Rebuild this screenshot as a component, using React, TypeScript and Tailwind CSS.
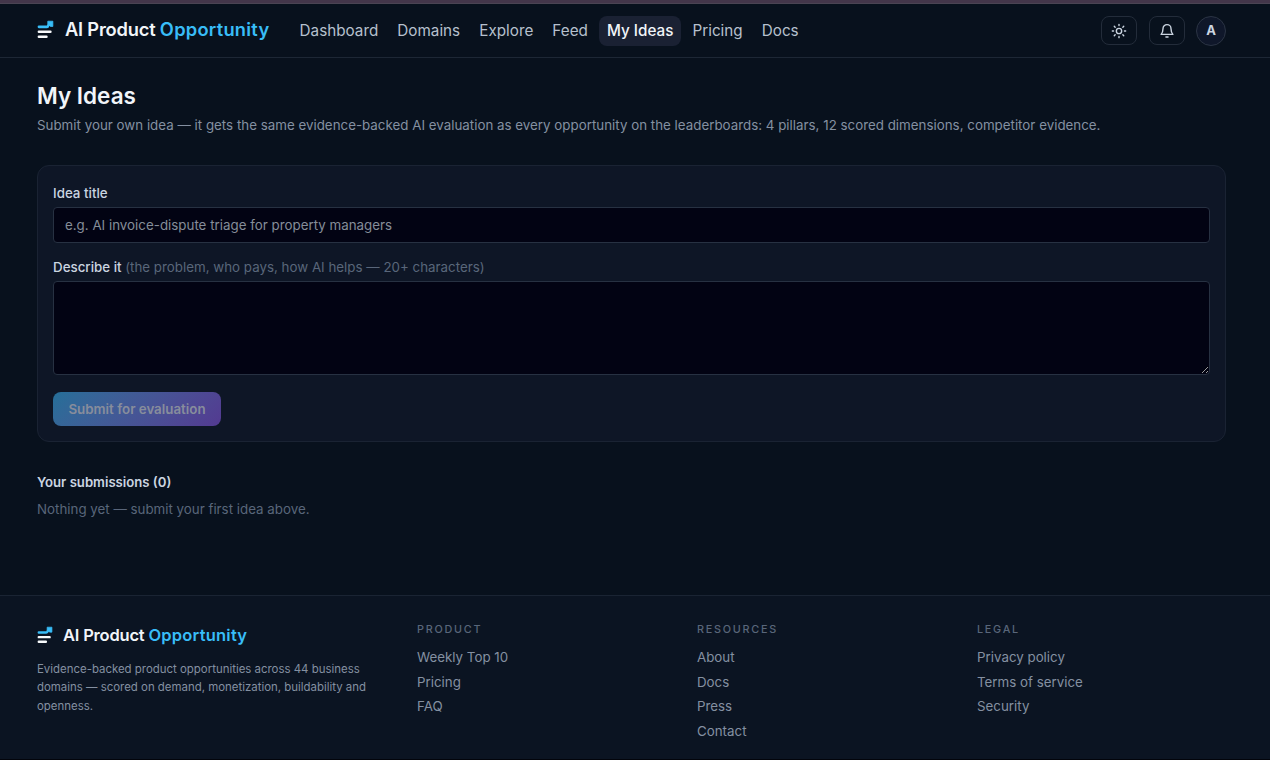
const navItems = [
  { label: "Dashboard" },
  { label: "Domains" },
  { label: "Explore" },
  { label: "Feed" },
  { label: "My Ideas", active: true },
  { label: "Pricing" },
  { label: "Docs" },
];

const footerColumns = [
  { title: "Product", links: ["Weekly Top 10", "Pricing", "FAQ"] },
  { title: "Resources", links: ["About", "Docs", "Press", "Contact"] },
  { title: "Legal", links: ["Privacy policy", "Terms of service", "Security"] },
];

function LogoMark({ className }: { className?: string }) {
  return (
    <svg viewBox="0 0 18 20" fill="none" className={className}>
      <path d="M2 7.2H10.4Q11.8 7.200 12 5.400L14 4" stroke="#38bdf8" strokeWidth="2.7" strokeLinecap="round" strokeLinejoin="round" />
      <path d="M11.400 1.200H16.800V6.800H14.200L11.400 4Z" fill="#38bdf8" stroke="#38bdf8" strokeWidth="0.8" strokeLinejoin="round" />
      <path d="M2 12.400H14.200M2 17.600H10" stroke="#f8fafc" strokeWidth="2.7" strokeLinecap="round" />
    </svg>
  );
}

function SunIcon() {
  return (
    <svg viewBox="0 0 24 24" fill="none" stroke="currentColor" strokeWidth="2.1" strokeLinecap="round" className="h-4 w-4">
      <circle cx="12" cy="12" r="4" />
      <path d="M12 2v1.8M12 20.2V22M2 12h1.8M20.2 12H22M4.9 4.9l1.3 1.3M17.8 17.8l1.3 1.3M4.9 19.1l1.3-1.3M17.8 6.2l1.3-1.3" />
    </svg>
  );
}

function BellIcon() {
  return (
    <svg viewBox="0 0 24 24" fill="none" stroke="currentColor" strokeWidth="2.1" strokeLinecap="round" strokeLinejoin="round" className="h-4 w-4">
      <path d="M6 8.500a6 6 0 0 1 12 0c0 5 1 6.500 2.800 8.600H3.200C5 15 6 13.500 6 8.500Z" />
      <path d="M10.400 21h3.200" />
    </svg>
  );
}

function Header() {
  return (
    <header className="flex h-[54px] shrink-0 items-center border-b border-[#1d2735] pl-[37px] pr-11">
      <a href="#" className="flex items-center pb-[3px]">
        <LogoMark className="h-[19px] w-[17px]" />
        <span className="ml-[11px] w-[205px] whitespace-nowrap text-[18.3px] font-semibold leading-6 tracking-[-0.2px] text-[#f1f5f9]">
          AI Product <span className="tracking-[0.25px] text-[#38bdf8]">Opportunity</span>
        </span>
      </a>
      <nav className="ml-[22px] flex items-center gap-[3.9px]">
        {navItems.map((item) => (
          <a
            key={item.label}
            href="#"
            className={`rounded-lg px-[7.6px] text-[15.25px] leading-[30px] ${
              item.active ? "bg-[#1a2133] font-medium text-[#f1f5f9]" : "text-[#b6c0cd]"
            }`}
          >
            {item.label}
          </a>
        ))}
      </nav>
      <div className="ml-auto flex items-center gap-[11.5px]">
        <button type="button" className="flex h-[29px] w-9 items-center justify-center rounded-lg border border-[#232c3a] text-[#cbd5e1]">
          <SunIcon />
        </button>
        <button type="button" className="flex h-[29px] w-9 items-center justify-center rounded-lg border border-[#232c3a] text-[#cbd5e1]">
          <BellIcon />
        </button>
        <button type="button" className="flex h-[30px] w-[30px] items-center justify-center rounded-full border border-[#2b3444] bg-[#0f172a] text-[13px] font-bold text-[#cbd5e1]">
          A
        </button>
      </div>
    </header>
  );
}

function IdeaForm() {
  return (
    <form className="mt-[30px] flex h-[277px] flex-col items-start rounded-xl border border-[#1a2333] bg-[#0e1626] px-[15px] pt-[17px]">
      <label htmlFor="title" className="text-[13.35px] font-medium leading-5 text-[#cbd5e1]">
        Idea title
      </label>
      <input
        id="title"
        placeholder="e.g. AI invoice-dispute triage for property managers"
        className="mt-1 h-9 w-full shrink-0 rounded-[4px] border border-[#273142] bg-[#020313] px-[11px] text-[13.35px] text-[#cbd5e1] outline-none placeholder:text-[#858d99]"
      />
      <label htmlFor="description" className="mt-[14px] text-[13.35px] font-medium leading-5 text-[#cbd5e1]">
        Describe it{" "}
        <span className="font-normal text-[#59667a]">
          (the problem, who pays, how AI helps — 20+ characters)
        </span>
      </label>
      <textarea
        id="description"
        className="mt-1 h-[94px] w-full shrink-0 resize-y rounded-[4px] border border-[#273142] bg-[#020313] px-[11px] py-2 text-[13.35px] text-[#cbd5e1] outline-none"
      />
      <button
        type="button"
        disabled
        className="mt-[17px] h-[34px] w-[168px] shrink-0 rounded-lg bg-linear-135 from-[#246f99] to-[#533a91] pt-[2px] text-[13.33px] font-semibold text-[#878d9c]"
      >
        Submit for evaluation
      </button>
    </form>
  );
}

function Footer() {
  return (
    <footer className="flex flex-1 border-t border-[#1a2433] bg-[#0b1422] pl-[37px] pt-[25px]">
      <div className="w-[380px] pt-[2px]">
        <a href="#" className="flex items-center">
          <LogoMark className="h-[18px] w-4" />
          <span className="ml-[10px] whitespace-nowrap text-[16.5px] font-semibold leading-6 tracking-[-0.2px] text-[#f1f5f9]">
            AI Product <span className="tracking-[0.22px] text-[#38bdf8]">Opportunity</span>
          </span>
        </a>
        <p className="mt-[13px] w-[340px] text-[11.43px] leading-[18.4px] text-[#8490a1]">
          Evidence-backed product opportunities across 44 business domains — scored on demand, monetization, buildability and openness.
        </p>
      </div>
      {footerColumns.map((column) => (
        <div key={column.title} className="w-[280px]">
          <h3 className="text-[10.8px] font-medium uppercase leading-[18px] tracking-[1.75px] text-[#59667a]">
            {column.title}
          </h3>
          <ul className="mt-[6px]">
            {column.links.map((link) => (
              <li key={link} className="text-[13.33px] leading-[24.6px] text-[#8490a1]">
                <a href="#">{link}</a>
              </li>
            ))}
          </ul>
        </div>
      ))}
    </footer>
  );
}

export default function App() {
  return (
    <div className="flex h-[760px] flex-col overflow-hidden border-b border-b-[#02040b] bg-[#08111d] font-[Inter,sans-serif]">
      <div className="h-1 shrink-0 border-b border-[#4a4453] bg-[#43364a]" />
      <Header />
      <main className="h-[537px] shrink-0 pl-[37px] pr-11 pt-[23px]">
        <h1 className="text-[22.5px] font-semibold leading-[30px] text-[#f1f5f9]">My Ideas</h1>
        <p className="mt-[4px] text-[13.35px] leading-5 text-[#8490a1]">
          Submit your own idea — it gets the same evidence-backed AI evaluation as every opportunity on the leaderboards: 4 pillars, 12 scored dimensions, competitor evidence.
        </p>
        <IdeaForm />
        <h2 className="mt-[30px] text-[13.15px] font-semibold leading-5 text-[#cbd5e1]">
          Your submissions (0)
        </h2>
        <p className="mt-[7px] text-[13.33px] leading-5 text-[#59667a]">
          Nothing yet — submit your first idea above.
        </p>
      </main>
      <Footer />
    </div>
  );
}
